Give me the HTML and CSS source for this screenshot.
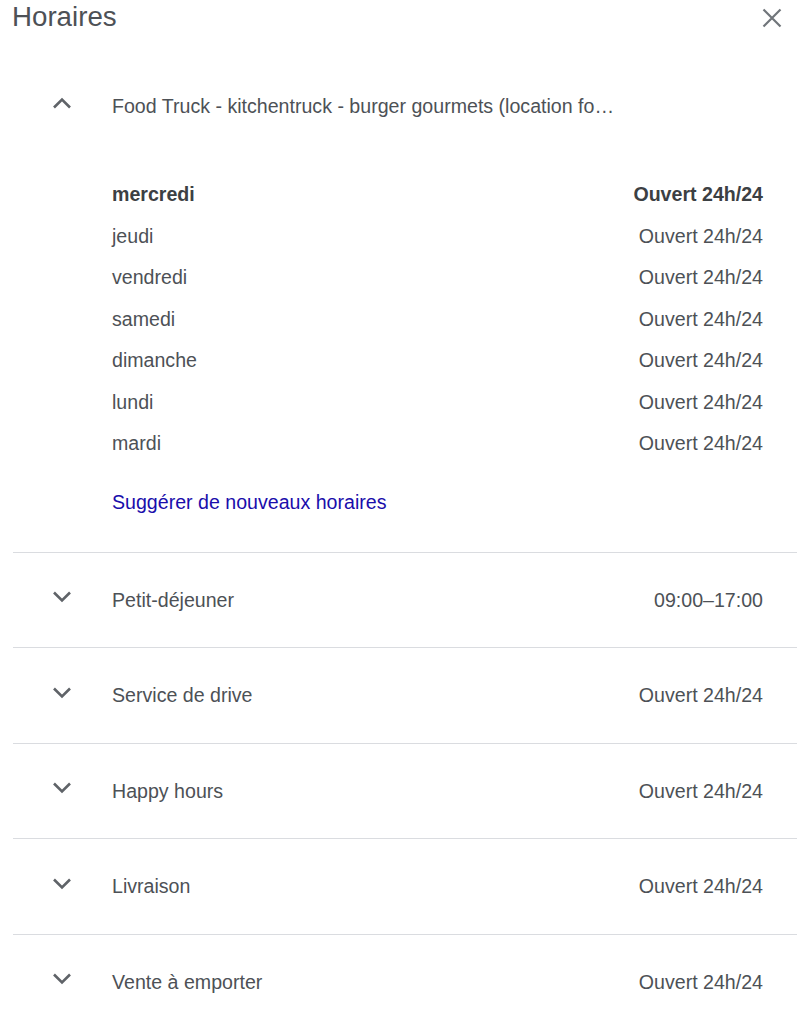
FILE: index.html
```html
<!DOCTYPE html>
<html lang="fr">
<head>
<meta charset="utf-8">
<title>Horaires</title>
<link rel="stylesheet" href="styles.css">
</head>
<body>
<div class="panel">
  <header class="header">
    <h1 class="title">Horaires</h1>
    <button class="close" aria-label="Fermer">
      <svg width="20" height="20" viewBox="0 0 20 20"><path d="M1.5 1.5 L18.5 18.5 M18.5 1.5 L1.5 18.5" stroke="#70757a" stroke-width="2.2" fill="none"/></svg>
    </button>
  </header>

  <section class="group open">
    <div class="group-head">
      <span class="icon-cell"><svg class="chev" width="20" height="12" viewBox="0 0 20 12"><polyline points="2,10.5 10,2.5 18,10.5" fill="none" stroke="#5f6368" stroke-width="2.6"/></svg></span>
      <span class="group-name">Food Truck - kitchentruck - burger gourmets (location fo…</span>
    </div>
    <ul class="days">
      <li class="day today"><span>mercredi</span><span>Ouvert 24h/24</span></li>
      <li class="day"><span>jeudi</span><span>Ouvert 24h/24</span></li>
      <li class="day"><span>vendredi</span><span>Ouvert 24h/24</span></li>
      <li class="day"><span>samedi</span><span>Ouvert 24h/24</span></li>
      <li class="day"><span>dimanche</span><span>Ouvert 24h/24</span></li>
      <li class="day"><span>lundi</span><span>Ouvert 24h/24</span></li>
      <li class="day"><span>mardi</span><span>Ouvert 24h/24</span></li>
    </ul>
    <a class="suggest" href="#">Suggérer de nouveaux horaires</a>
  </section>

  <section class="group collapsed">
    <span class="icon-cell"><svg class="chev" width="20" height="12" viewBox="0 0 20 12"><polyline points="2,1.5 10,9.5 18,1.5" fill="none" stroke="#5f6368" stroke-width="2.6"/></svg></span>
    <span class="group-name">Petit-déjeuner</span>
    <span class="group-hours">09:00–17:00</span>
  </section>
  <section class="group collapsed">
    <span class="icon-cell"><svg class="chev" width="20" height="12" viewBox="0 0 20 12"><polyline points="2,1.5 10,9.5 18,1.5" fill="none" stroke="#5f6368" stroke-width="2.6"/></svg></span>
    <span class="group-name">Service de drive</span>
    <span class="group-hours">Ouvert 24h/24</span>
  </section>
  <section class="group collapsed">
    <span class="icon-cell"><svg class="chev" width="20" height="12" viewBox="0 0 20 12"><polyline points="2,1.5 10,9.5 18,1.5" fill="none" stroke="#5f6368" stroke-width="2.6"/></svg></span>
    <span class="group-name">Happy hours</span>
    <span class="group-hours">Ouvert 24h/24</span>
  </section>
  <section class="group collapsed">
    <span class="icon-cell"><svg class="chev" width="20" height="12" viewBox="0 0 20 12"><polyline points="2,1.5 10,9.5 18,1.5" fill="none" stroke="#5f6368" stroke-width="2.6"/></svg></span>
    <span class="group-name">Livraison</span>
    <span class="group-hours">Ouvert 24h/24</span>
  </section>
  <section class="group collapsed">
    <span class="icon-cell"><svg class="chev" width="20" height="12" viewBox="0 0 20 12"><polyline points="2,1.5 10,9.5 18,1.5" fill="none" stroke="#5f6368" stroke-width="2.6"/></svg></span>
    <span class="group-name">Vente à emporter</span>
    <span class="group-hours">Ouvert 24h/24</span>
  </section>
</div>
</body>
</html>
```

FILE: styles.css
```css
html, body {
  margin: 0;
  padding: 0;
  background: #fff;
}
body {
  font-family: "Liberation Sans", Arial, sans-serif;
  color: #4d5156;
}
.panel {
  padding: 0 10px 0 13px;
}
.header {
  display: flex;
  align-items: center;
  justify-content: space-between;
  height: 34px;
}
.title {
  margin: 0 0 0 -1px;
  font-size: 27.7px;
  line-height: 34px;
  font-weight: 400;
  color: #4d5156;
}
.close {
  display: flex;
  align-items: center;
  justify-content: center;
  margin: 1px 15px 0 0;
  padding: 0;
  border: 0;
  background: none;
  width: 20px;
  height: 20px;
}
.group {
  border-bottom: 1px solid #dadce0;
}
.open {
  padding: 60px 0 38px 0;
}
.group-head {
  display: flex;
  align-items: center;
  height: 24px;
  font-size: 19.6px;
  line-height: 24px;
}
.icon-cell {
  display: flex;
  align-items: center;
  width: 99px;
  flex: none;
  padding-left: 39px;
  box-sizing: border-box;
}
.chev {
  display: block;
  margin-bottom: 6px;
}
.group-name {
  font-size: 19.6px;
  flex: 1;
  white-space: nowrap;
}
.days {
  list-style: none;
  margin: 56px 0 0 0;
  padding: 0 34px 0 99px;
}
.day {
  display: flex;
  justify-content: space-between;
  height: 41.5px;
  line-height: 41.5px;
  font-size: 19.6px;
}
.today {
  font-weight: 700;
  color: #3c4043;
}
.suggest {
  display: block;
  margin: 25px 0 0 99px;
  font-size: 19.6px;
  line-height: 24px;
  color: #1a0dab;
  text-decoration: none;
}
.collapsed {
  display: flex;
  align-items: center;
  padding: 1px 34px 0 0;
  height: 93.5px;
  font-size: 19.6px;
}
.collapsed:last-child {
  border-bottom: 0;
}
.group-hours {
  white-space: nowrap;
}
```
